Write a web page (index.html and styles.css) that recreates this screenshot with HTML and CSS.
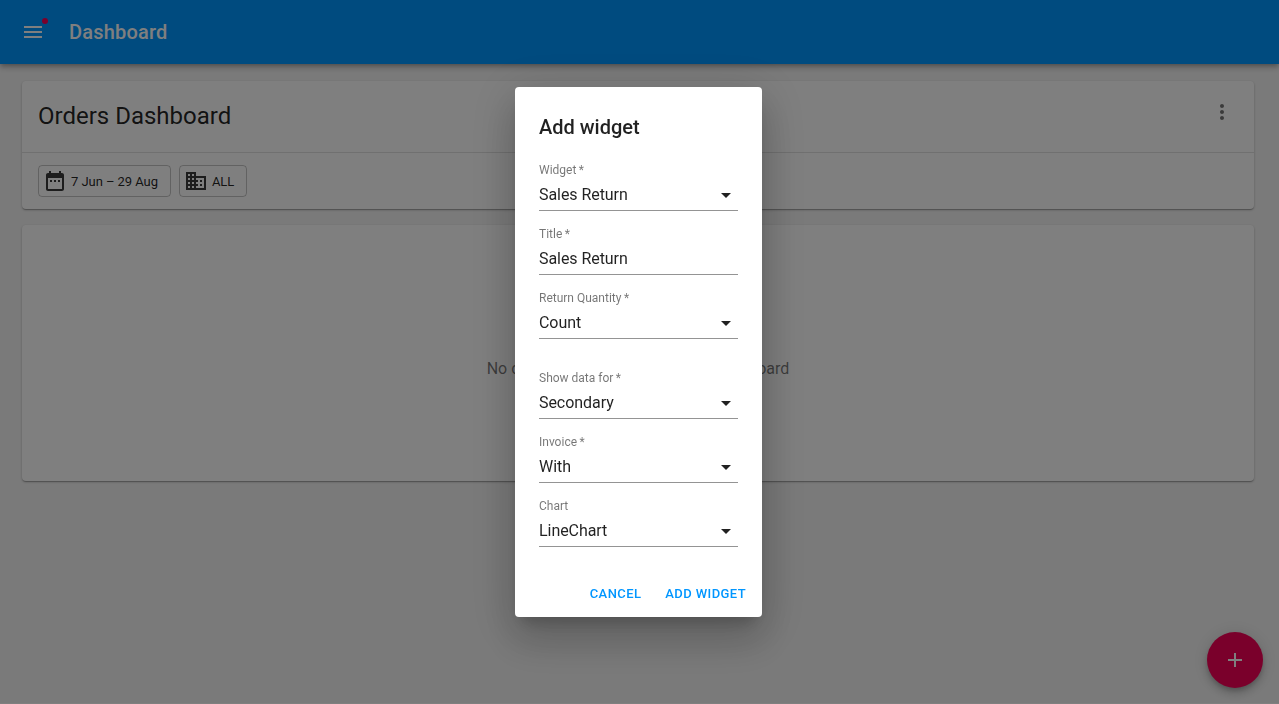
FILE: index.html
```html
<!DOCTYPE html>
<html lang="en">
<head>
<meta charset="utf-8">
<title>Dashboard</title>
<link rel="stylesheet" href="styles.css">
</head>
<body>
<header class="appbar">
  <button class="menu-btn" aria-label="menu">
    <svg class="menu-icon" viewBox="0 0 24 24" width="24" height="24"><path d="M3 18h18v-2H3v2zm0-5h18v-2H3v2zm0-7v2h18V6H3z"/></svg>
    <span class="menu-dot"></span>
  </button>
  <h1 class="appbar-title">Dashboard</h1>
</header>
<main class="content">
  <section class="card">
    <div class="card-head">
      <h2 class="card-title">Orders Dashboard</h2>
      <svg class="more" viewBox="0 0 24 24" width="24" height="24"><path d="M12 8c1.1 0 2-.9 2-2s-.9-2-2-2-2 .9-2 2 .9 2 2 2zm0 2c-1.1 0-2 .9-2 2s.9 2 2 2 2-.9 2-2-.9-2-2-2zm0 6c-1.1 0-2 .9-2 2s.9 2 2 2 2-.9 2-2-.9-2-2-2z"/></svg>
    </div>
    <div class="filters">
      <div class="chip">
        <svg viewBox="0 0 24 24" width="24" height="24"><path d="M9 11H7v2h2v-2zm4 0h-2v2h2v-2zm4 0h-2v2h2v-2zm2-7h-1V2h-2v2H8V2H6v2H5c-1.11 0-1.99.9-1.99 2L3 20c0 1.1.89 2 2 2h14c1.1 0 2-.9 2-2V6c0-1.1-.9-2-2-2zm0 16H5V9h14v11z"/></svg>
        <span>7 Jun – 29 Aug</span>
      </div>
      <div class="chip">
        <svg viewBox="0 0 24 24" width="24" height="24"><path d="M12 7V3H2v18h20V7H12zM6 19H4v-2h2v2zm0-4H4v-2h2v2zm0-4H4V9h2v2zm0-4H4V5h2v2zm4 12H8v-2h2v2zm0-4H8v-2h2v2zm0-4H8V9h2v2zm0-4H8V5h2v2zm10 12h-8v-2h2v-2h-2v-2h2v-2h-2V9h8v10zm-2-8h-2v2h2v-2zm0 4h-2v2h2v-2z"/></svg>
        <span>ALL</span>
      </div>
    </div>
  </section>
  <section class="card empty">
    <p>No chart has been added to the dashboard</p>
  </section>
</main>
<button class="fab" aria-label="add">
  <svg viewBox="0 0 24 24" width="24" height="24"><path d="M19 13h-6v6h-2v-6H5v-2h6V5h2v6h6v2z"/></svg>
</button>
<div class="overlay">
  <div class="dialog">
    <h2 class="dialog-title">Add widget</h2>
    <div class="fields">
      <div class="field"><label>Widget&thinsp;*</label><div class="value">Sales Return<svg class="caret" viewBox="0 0 24 24" width="24" height="24"><path d="M7 10l5 5 5-5z"/></svg></div></div>
      <div class="field"><label>Title&thinsp;*</label><div class="value">Sales Return</div></div>
      <div class="field"><label>Return Quantity&thinsp;*</label><div class="value">Count<svg class="caret" viewBox="0 0 24 24" width="24" height="24"><path d="M7 10l5 5 5-5z"/></svg></div></div>
      <div class="field spaced"><label>Show data for&thinsp;*</label><div class="value">Secondary<svg class="caret" viewBox="0 0 24 24" width="24" height="24"><path d="M7 10l5 5 5-5z"/></svg></div></div>
      <div class="field"><label>Invoice&thinsp;*</label><div class="value">With<svg class="caret" viewBox="0 0 24 24" width="24" height="24"><path d="M7 10l5 5 5-5z"/></svg></div></div>
      <div class="field"><label>Chart</label><div class="value">LineChart<svg class="caret" viewBox="0 0 24 24" width="24" height="24"><path d="M7 10l5 5 5-5z"/></svg></div></div>
    </div>
    <div class="actions">
      <button class="action">Cancel</button>
      <button class="action">Add widget</button>
    </div>
  </div>
</div>
</body>
</html>
```
FILE: styles.css
```css
* { box-sizing: border-box; }
html { background: #fff; }
body {
  margin: 0;
  height: 703px;
  overflow: hidden;
  background: #f5f5f5;
  color: rgba(0,0,0,.87);
  font-family: Roboto, "Noto Sans", sans-serif;
  font-size: 16px;
}
button { font-family: inherit; border: 0; background: none; padding: 0; cursor: pointer; }
.appbar {
  height: 64px;
  background: #0096ff;
  color: #fff;
  display: flex;
  align-items: center;
  padding-left: 21px;
  box-shadow: 0 2px 4px -1px rgba(0,0,0,.2), 0 4px 5px 0 rgba(0,0,0,.14), 0 1px 10px 0 rgba(0,0,0,.12);
}
.menu-btn { position: relative; width: 24px; height: 24px; display: block; margin-right: 24px; }
.menu-icon { display: block; fill: #fff; }
.menu-dot {
  position: absolute;
  top: -2px;
  left: 21px;
  width: 6px;
  height: 6px;
  border-radius: 50%;
  background: #f50057;
}
.appbar-title { margin: 0; font-size: 20px; font-weight: 500; line-height: 1; letter-spacing: .01em; }
.content { padding: 17px 25px 0 22px; display: flex; flex-direction: column; gap: 16px; }
.card {
  background: #fff;
  border-radius: 4px;
  box-shadow: 0 1px 3px 0 rgba(0,0,0,.2), 0 1px 1px 0 rgba(0,0,0,.14), 0 2px 1px -1px rgba(0,0,0,.12);
}
.card-head {
  height: 72px;
  display: flex;
  align-items: center;
  justify-content: space-between;
  padding: 0 20px 0 16px;
  border-bottom: 1px solid rgba(0,0,0,.12);
}
.card-title { margin: 0; font-size: 24px; font-weight: 400; line-height: 1.2; }
.more { fill: rgba(0,0,0,.54); margin-top: -9px; }
.filters { height: 56px; display: flex; align-items: center; gap: 8px; padding: 0 16px; }
.chip {
  height: 32px;
  display: flex;
  align-items: center;
  gap: 4px;
  padding: 0 12px 0 4px;
  border: 1px solid rgba(0,0,0,.23);
  border-radius: 4px;
  font-size: 13px;
  letter-spacing: -.06px;
  color: rgba(0,0,0,.87);
}
.chip svg { fill: rgba(0,0,0,.77); flex: none; }
.empty {
  height: 256px;
  display: flex;
  align-items: center;
  justify-content: center;
  color: rgba(0,0,0,.54);
}
.empty p { margin: 31px 0 0; }
.fab {
  position: fixed;
  right: 16px;
  bottom: 16px;
  width: 56px;
  height: 56px;
  border-radius: 50%;
  background: #f50057;
  display: flex;
  align-items: center;
  justify-content: center;
  box-shadow: 0 3px 5px -1px rgba(0,0,0,.2), 0 6px 10px 0 rgba(0,0,0,.14), 0 1px 18px 0 rgba(0,0,0,.12);
}
.fab svg { fill: #fff; }
.overlay {
  position: fixed;
  inset: 0;
  background: rgba(0,0,0,.5);
  display: flex;
  align-items: center;
  justify-content: center;
  padding-right: 2px;
}
.dialog {
  width: 247px;
  height: 530px;
  background: #fff;
  border-radius: 4px;
  display: flex;
  flex-direction: column;
  box-shadow: 0 11px 15px -7px rgba(0,0,0,.2), 0 24px 38px 3px rgba(0,0,0,.14), 0 9px 46px 8px rgba(0,0,0,.12);
}
.dialog-title { margin: 0; padding: 28px 24px 0; font-size: 20px; font-weight: 500; line-height: 24px; }
.fields { padding: 24px 24px 0; display: flex; flex-direction: column; gap: 16px; flex: 1; }
.field.spaced { margin-top: 16px; }
.field { height: 48px; border-bottom: 1px solid rgba(0,0,0,.42); display: flex; flex-direction: column; }
.field label { font-size: 12px; line-height: 14px; height: 16px; color: rgba(0,0,0,.54); }
.value { position: relative; height: 31px; font-size: 16px; line-height: 31px; letter-spacing: -.06px; }
.caret { position: absolute; right: 0; top: 4px; fill: rgba(0,0,0,.87); }
.actions { display: flex; justify-content: flex-end; gap: 8px; padding: 0 8px 6px; }
.action {
  height: 36px;
  padding: 0 8px;
  font-size: 13px;
  font-weight: 500;
  letter-spacing: .4px;
  text-transform: uppercase;
  color: #0096ff;
}
```
